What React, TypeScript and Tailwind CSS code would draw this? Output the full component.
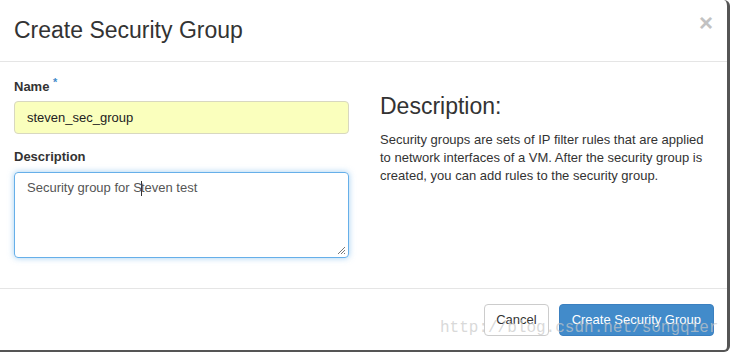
const font = { fontFamily: '"Liberation Sans", Arial, sans-serif' };

export default function App() {
  return (
    <div className="w-[731px] h-[352px] bg-white overflow-hidden" style={font}>
      <div className="relative w-[730px] h-[352px] bg-white border-r-[3px] border-b-[2px] border-[#555] rounded-tr-[6px] rounded-br-[6px] flex flex-col text-[#333]">
        {/* header */}
        <div className="h-[62px] border-b border-[#e5e5e5] flex items-start justify-between pl-[14px] pr-[14px] pt-[15px]">
          <h3 className="text-[23px] leading-[30px] font-normal">Create Security Group</h3>
          <button className="text-[24px] leading-[24px] font-bold text-[#c2c2c2] -mt-[4px]">×</button>
        </div>

        {/* body */}
        <div className="h-[226px] flex gap-[31px] pl-[14px] pt-[16px]">
          <div className="w-[335px] flex flex-col">
            <label className="text-[13px] leading-[18px] font-bold mb-[5px]">
              Name <sup className="text-[#428bca] text-[11px]">*</sup>
            </label>
            <input
              readOnly
              value="steven_sec_group"
              className="h-[33px] rounded-[4px] border border-[#d8d8c0] bg-[#faffbd] px-[12px] text-[13px] text-[#222] outline-none"
            />
            <label className="text-[13px] leading-[18px] font-bold mt-[14px] mb-[6px]">Description</label>
            <div className="relative h-[86px] rounded-[4px] border border-[#66afe9] shadow-[0_0_6px_rgba(102,175,233,0.6)] px-[12px] py-[6px] text-[13px] leading-[18px] text-[#555]">
              <span>Security group for S</span>
              <span className="inline-block w-px h-[15px] bg-[#333] align-middle -mx-px"></span>
              <span>teven test</span>
              <svg className="absolute right-[2px] bottom-[2px]" width="9" height="9" viewBox="0 0 9 9">
                <path d="M8 1 L1 8 M8 4 L4 8 M8 7 L7 8" stroke="#777" strokeWidth="1" />
              </svg>
            </div>
          </div>

          <div className="w-[335px] pt-[15px]">
            <h3 className="text-[23px] leading-[26px] font-normal mb-[12px]">Description:</h3>
            <p className="text-[13px] leading-[18px] text-[#333]">
              Security groups are sets of IP filter rules that are applied to network interfaces of a VM. After the security group is created, you can add rules to the security group.
            </p>
          </div>
        </div>

        {/* footer */}
        <div className="flex-1 border-t border-[#e5e5e5] flex justify-end items-start gap-[10px] pr-[13px] pt-[15px]">
          <button className="h-[32px] px-[11px] rounded-[4px] border border-[#ccc] bg-white text-[13px] text-[#333]">Cancel</button>
          <button className="h-[32px] px-[12px] rounded-[4px] border border-[#3b80c0] bg-[#428bca] text-[13px] text-white">Create Security Group</button>
        </div>

        <div
          className="absolute left-[440px] top-[319px] text-[16px] leading-[18px] text-[#c8c8c8]/70 pointer-events-none"
          style={{ fontFamily: '"Liberation Mono", "DejaVu Sans Mono", monospace' }}
        >
          http://blog.csdn.net/songqier
        </div>
      </div>
    </div>
  );
}
